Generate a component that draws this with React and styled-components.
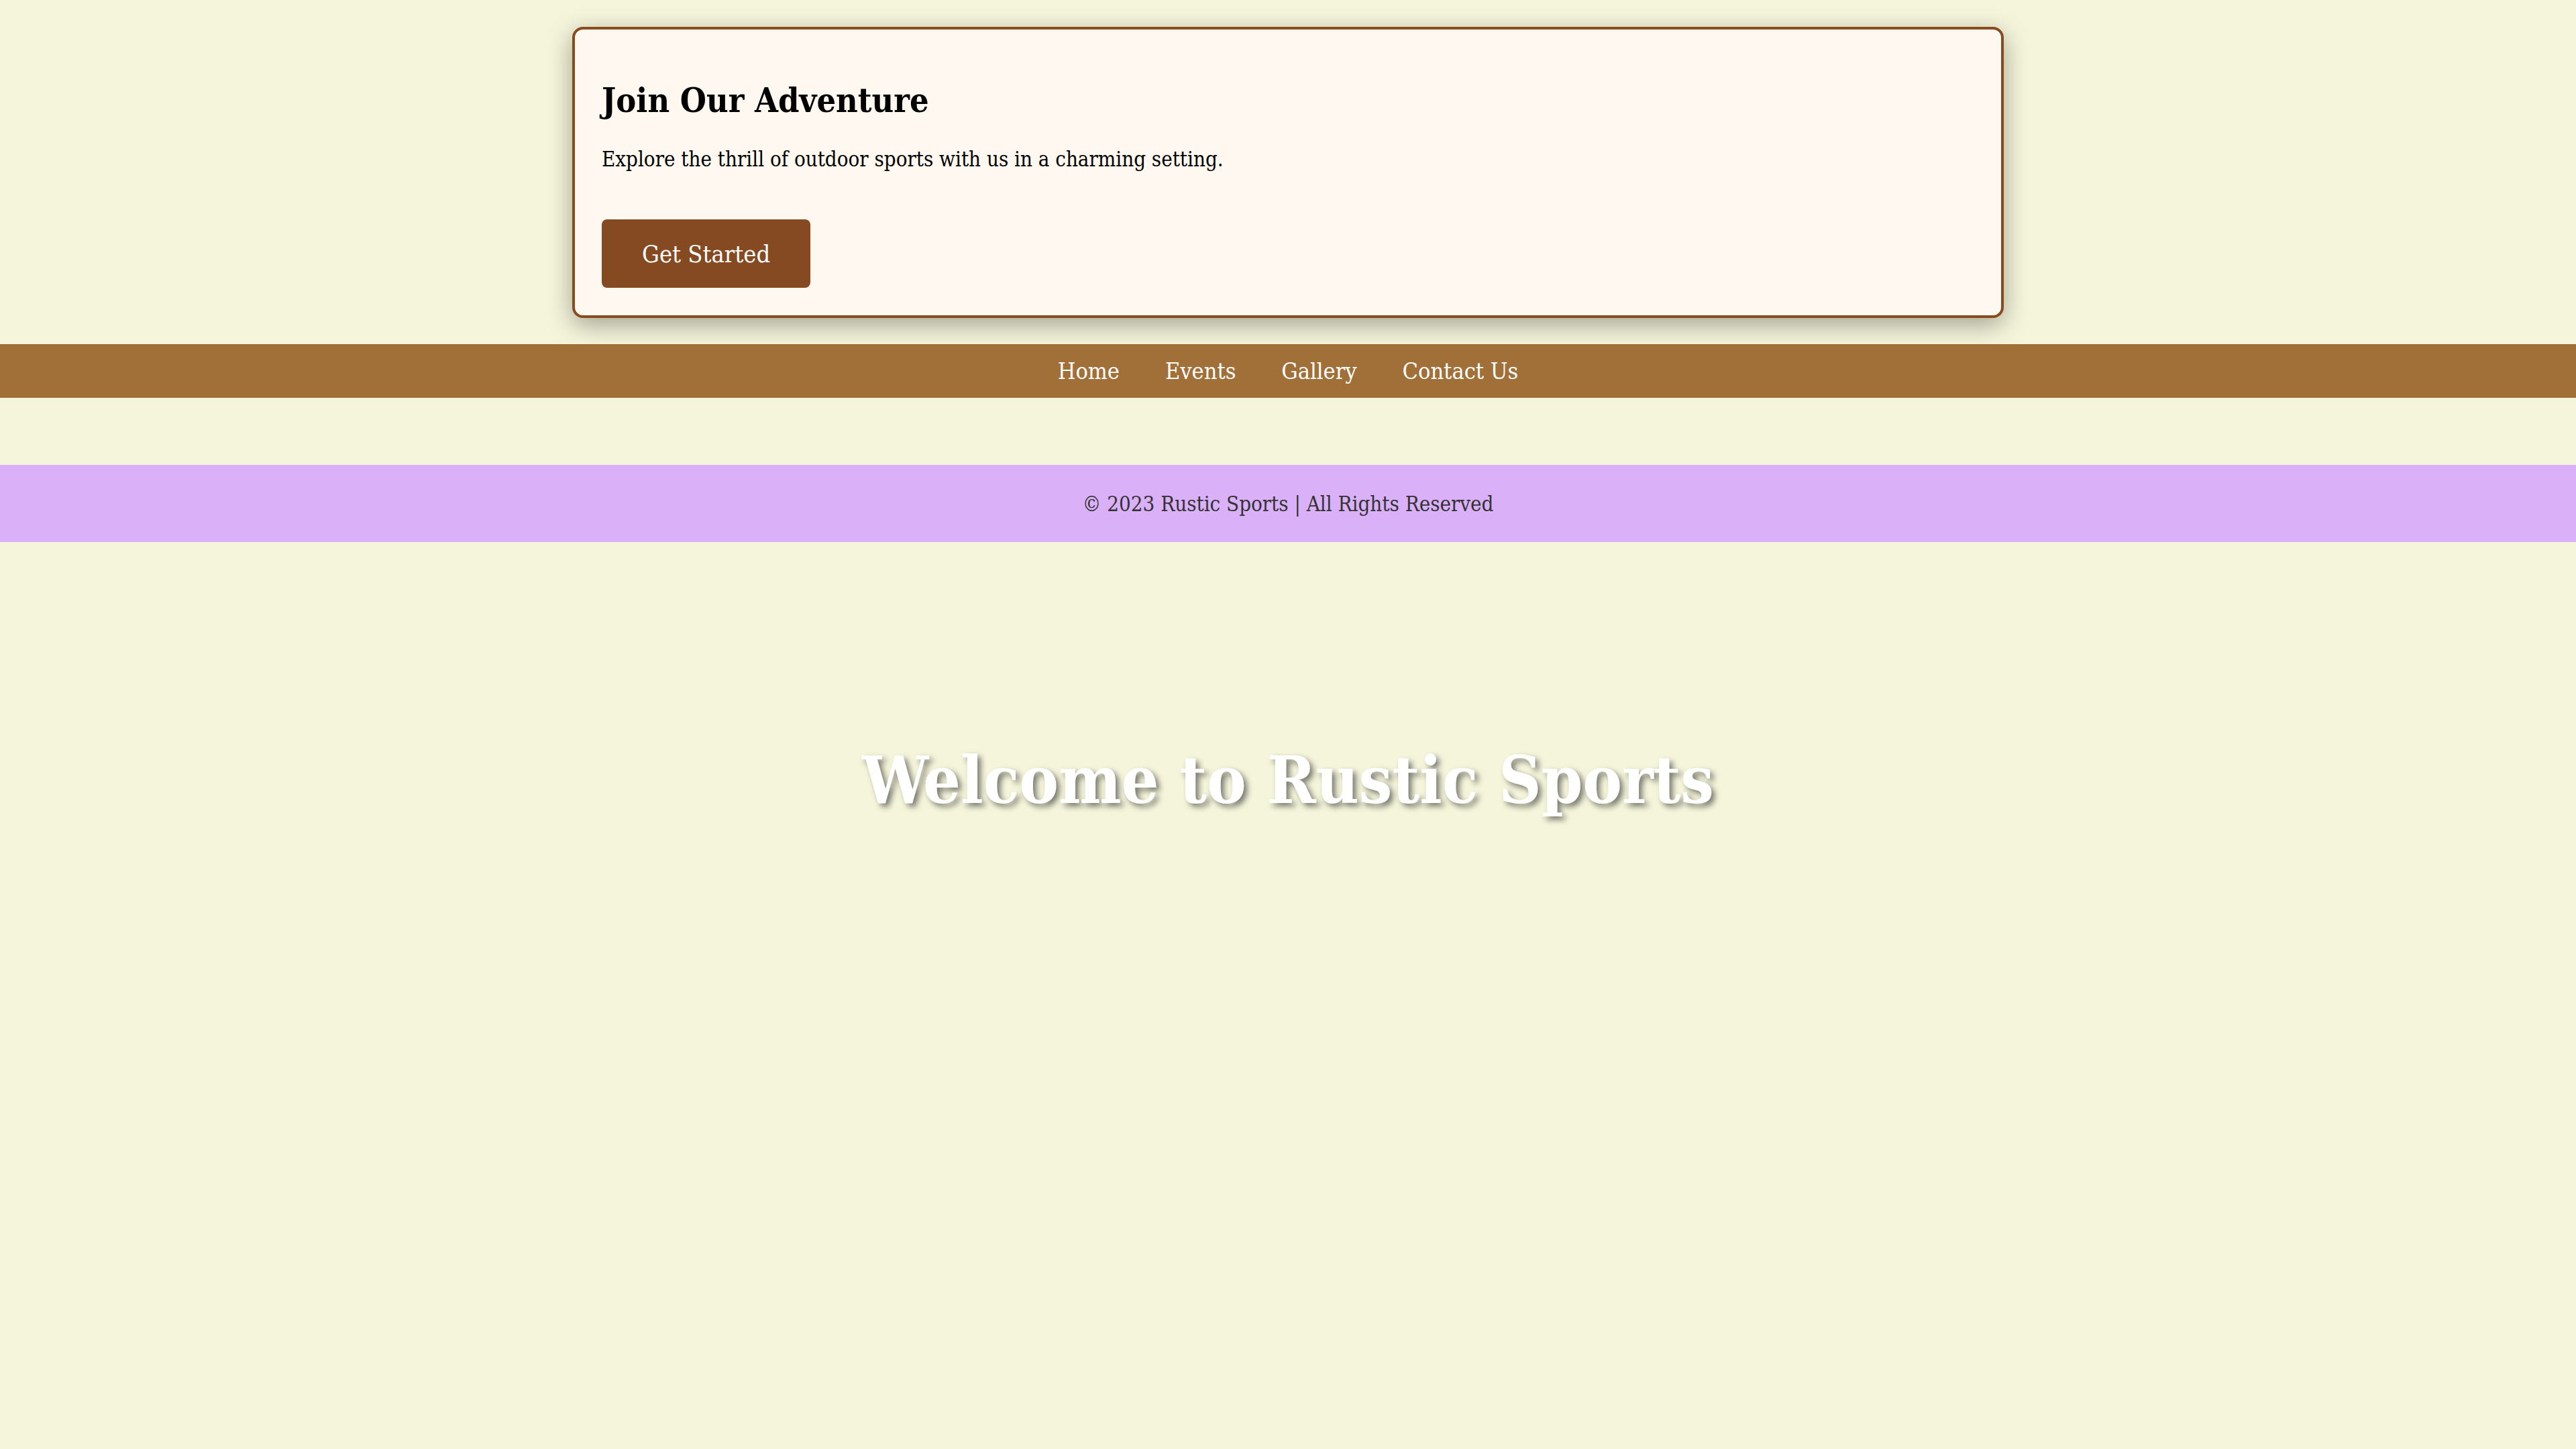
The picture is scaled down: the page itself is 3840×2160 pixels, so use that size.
import React from "react";
import styled, { createGlobalStyle } from "styled-components";

const serif = `"DejaVu Serif Condensed", "DejaVu Serif", serif`;

const GlobalStyle = createGlobalStyle`
	body {
		margin: 0;
		background-color: #f5f5dc;
		font-family: ${serif};
		font-stretch: semi-condensed;
	}
`;

const Page = styled.div`
	display: flex;
	flex-direction: column;
	min-height: 2160px;
	padding-top: 40px;
	box-sizing: border-box;
`;

const Card = styled.section`
	box-sizing: border-box;
	width: 2134px;
	margin: 0 auto;
	padding: 0 40px 41px 40px;
	background-color: #fff8f1;
	border: 4px solid #8a4a1f;
	border-radius: 16px;
	box-shadow: 0px 10px 36px rgba(0, 0, 0, 0.35);
`;

const CardTitle = styled.h2`
	font-size: 50px;
	line-height: 1.2;
	font-weight: bold;
	margin: 76px 0 0 0;
	color: #000;
`;

const CardText = styled.p`
	font-size: 31px;
	line-height: 1.2;
	margin: 39px 0 0 0;
	color: #000;
`;

const Button = styled.button`
	margin-top: 71px;
	height: 102px;
	padding: 0 60px;
	background-color: #854a22;
	color: #fff;
	border: 0;
	border-radius: 8px;
	font-family: ${serif};
	font-stretch: semi-condensed;
	font-size: 36px;
`;

const Nav = styled.nav`
	margin-top: 39px;
	height: 80px;
	display: flex;
	justify-content: center;
	align-items: center;
	gap: 68px;
	background-color: #a17038;
`;

const NavLink = styled.a`
	color: #fff;
	font-size: 34px;
	text-decoration: none;
`;

const Footer = styled.footer`
	margin-top: 100px;
	height: 115px;
	display: flex;
	justify-content: center;
	align-items: center;
	background-color: #dab0f8;
	color: #333;
	font-size: 31px;
`;

const Hero = styled.header`
	padding-top: 296px;
	text-align: center;
`;

const HeroTitle = styled.h1`
	margin: 0;
	font-size: 98px;
	line-height: 1.2;
	font-weight: bold;
	color: #fff;
	text-shadow: 5px 5px 8px rgba(0, 0, 0, 0.5);
`;

const App = () => {
	return (
		<Page>
			<GlobalStyle />
			<Card>
				<CardTitle>Join Our Adventure</CardTitle>
				<CardText>Explore the thrill of outdoor sports with us in a charming setting.</CardText>
				<Button>Get Started</Button>
			</Card>
			<Nav>
				<NavLink href="#">Home</NavLink>
				<NavLink href="#">Events</NavLink>
				<NavLink href="#">Gallery</NavLink>
				<NavLink href="#">Contact Us</NavLink>
			</Nav>
			<Footer>© 2023 Rustic Sports | All Rights Reserved</Footer>
			<Hero>
				<HeroTitle>Welcome to Rustic Sports</HeroTitle>
			</Hero>
		</Page>
	);
};

export default App;
